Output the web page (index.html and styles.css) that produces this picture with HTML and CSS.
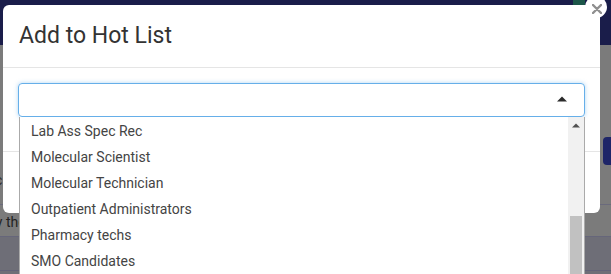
FILE: index.html
```html
<!DOCTYPE html>
<html lang="en">
<head>
<meta charset="utf-8">
<title>Add to Hot List</title>
<link rel="stylesheet" href="styles.css">
</head>
<body>
<div class="page">
  <div class="topbar"><span class="top-btn"></span></div>
  <div class="toolbar">
    <span class="bg-c">c</span>
    <span class="bg-btn"></span>
  </div>
  <div class="filter-row"><span class="bg-text">by the</span></div>
  <div class="bg-row"></div>
  <div class="bg-row"></div>
</div>

<div class="modal">
  <button class="close" aria-label="Close">
    <svg width="10" height="10" viewBox="0 0 10 10"><path d="M1 1L9 9M9 1L1 9" stroke="#8f8f8f" stroke-width="2.4" stroke-linecap="round"/></svg>
  </button>
  <div class="modal-header">
    <h4 class="modal-title">Add to Hot List</h4>
  </div>
  <div class="modal-body">
    <div class="select-wrap">
      <div class="select">
        <svg class="caret" width="10" height="6" viewBox="0 0 10 6"><path d="M0 5.5L5 0.5L10 5.5Z" fill="#2b2b2b"/></svg>
      </div>
      <div class="dropdown">
        <ul class="options">
          <li>Lab Ass Spec Rec</li>
          <li>Molecular Scientist</li>
          <li>Molecular Technician</li>
          <li>Outpatient Administrators</li>
          <li>Pharmacy techs</li>
          <li>SMO Candidates</li>
        </ul>
        <div class="scrollbar">
          <div class="sb-arrow"><svg width="8" height="5" viewBox="0 0 8 5"><path d="M0 4.5L4 0.5L8 4.5Z" fill="#505050"/></svg></div>
          <div class="sb-track"><div class="sb-thumb"></div></div>
        </div>
      </div>
    </div>
  </div>
  <div class="modal-footer"></div>
</div>
</body>
</html>
```

FILE: styles.css
```css
* { box-sizing: border-box; }
html, body { margin: 0; padding: 0; }
body {
  width: 611px;
  height: 274px;
  overflow: hidden;
  font-family: Roboto, "Liberation Sans", Arial, sans-serif;
  background: #7b7b7b;
}
.page { display: flex; flex-direction: column; }
.topbar {
  height: 45px;
  background: #1a1d4a;
  display: flex;
  justify-content: flex-end;
  padding-right: 26px;
}
.top-btn { width: 12px; height: 6px; background: #1c5649; }
.toolbar {
  height: 160px;
  display: flex;
  justify-content: space-between;
  align-items: flex-start;
  border-bottom: 1px solid #6a6a7c;
  padding-top: 96px;
}
.bg-c { color: #2a2a2a; font-size: 14px; margin-left: -5px; margin-top: 32px; line-height: 14px; }
.bg-btn {
  width: 8px; height: 28px;
  background: #1e2568;
  border-radius: 4px 0 0 4px;
  margin-top: -4px;
}
.filter-row {
  height: 32px;
  background: #7b7b7b;
  border-bottom: 1px solid #66667a;
  display: flex;
  align-items: center;
}
.bg-text { color: #222; font-size: 14px; margin-left: -12px; margin-top: 2px; }
.bg-row { height: 34px; background: #6e6e77; border-bottom: 1px solid #626278; }

.modal {
  position: absolute;
  left: 3px;
  top: 5px;
  width: 597px;
  height: 208px;
  background: #fff;
  border-radius: 6px;
  display: flex;
  flex-direction: column;
}
.close {
  position: absolute;
  right: -7px;
  top: -9px;
  width: 22px;
  height: 22px;
  border-radius: 50%;
  background: #fff;
  border: 0;
  padding: 0;
  display: flex;
  align-items: center;
  justify-content: center;
}
.close svg { margin-top: 4px; margin-left: 1px; }
.modal-header {
  padding: 15px 16px;
  border-bottom: 1px solid #e5e5e5;
}
.modal-title {
  margin: 0;
  font-size: 23px;
  font-weight: 400;
  line-height: 32px;
  color: #333;
}
.modal-body {
  padding: 15px 15px 34px;
}
.select-wrap { position: relative; }
.select {
  height: 34px;
  border: 1px solid #66afe9;
  border-radius: 4px;
  box-shadow: 0 0 4px rgba(102, 175, 233, 0.5);
  display: flex;
  align-items: center;
  justify-content: flex-end;
  padding-right: 17px;
}
.caret { display: block; margin-top: -2px; }
.dropdown {
  position: absolute;
  left: 1px;
  right: 0;
  top: 34px;
  height: 200px;
  background: #fff;
  border: 1px solid #aaa;
  border-top: 0;
  display: flex;
}
.options {
  list-style: none;
  margin: 0;
  padding: 1px 0 0;
  flex: 1;
}
.options li {
  height: 26px;
  line-height: 26px;
  padding-left: 11px;
  font-size: 14px;
  color: #444;
}
.scrollbar {
  width: 16px;
  background: #f1f1f1;
  display: flex;
  flex-direction: column;
}
.sb-arrow {
  height: 18px;
  display: flex;
  align-items: center;
  justify-content: center;
}
.sb-track { flex: 1; padding: 82px 2px 0; }
.sb-thumb { height: 100px; background: #c1c1c1; }
.modal-footer {
  flex: 1;
  border-top: 1px solid #e5e5e5;
}
```
